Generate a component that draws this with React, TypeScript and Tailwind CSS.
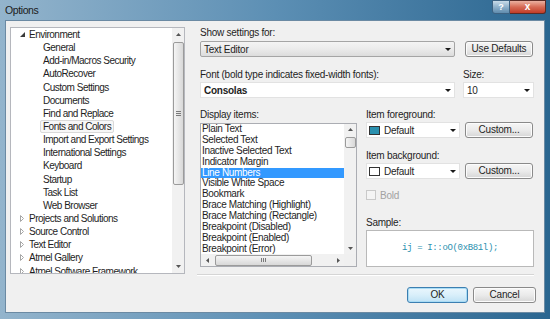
import React from "react";

const treeItems: { label: string; level: number; expanded?: boolean; selected?: boolean }[] = [
  { label: "Environment", level: 0, expanded: true },
  { label: "General", level: 1 },
  { label: "Add-in/Macros Security", level: 1 },
  { label: "AutoRecover", level: 1 },
  { label: "Custom Settings", level: 1 },
  { label: "Documents", level: 1 },
  { label: "Find and Replace", level: 1 },
  { label: "Fonts and Colors", level: 1, selected: true },
  { label: "Import and Export Settings", level: 1 },
  { label: "International Settings", level: 1 },
  { label: "Keyboard", level: 1 },
  { label: "Startup", level: 1 },
  { label: "Task List", level: 1 },
  { label: "Web Browser", level: 1 },
  { label: "Projects and Solutions", level: 0 },
  { label: "Source Control", level: 0 },
  { label: "Text Editor", level: 0 },
  { label: "Atmel Gallery", level: 0 },
  { label: "Atmel Software Framework", level: 0 },
];

const displayItems = [
  "Plain Text",
  "Selected Text",
  "Inactive Selected Text",
  "Indicator Margin",
  "Line Numbers",
  "Visible White Space",
  "Bookmark",
  "Brace Matching (Highlight)",
  "Brace Matching (Rectangle)",
  "Breakpoint (Disabled)",
  "Breakpoint (Enabled)",
  "Breakpoint (Error)",
];

function Arrow({ dir }: { dir: "up" | "down" | "left" | "right" }) {
  const vert = dir === "up" || dir === "down";
  const pts = {
    up: "0,3 5,3 2.5,0",
    down: "0,0 5,0 2.5,3",
    left: "3,0 3,5 0,2.5",
    right: "0,0 0,5 3,2.5",
  }[dir];
  return (
    <svg width={vert ? 5 : 3} height={vert ? 3 : 5} viewBox={vert ? "0 0 5 3" : "0 0 3 5"}>
      <polygon points={pts} fill="#555" />
    </svg>
  );
}

function DropArrow() {
  return (
    <svg width="6" height="3" viewBox="0 0 6 3" className="shrink-0">
      <polygon points="0,0 6,0 3,3" fill="#1a1a1a" />
    </svg>
  );
}

function Button({ label, focus, className }: { label: string; focus?: boolean; className: string }) {
  return (
    <div
      className={
        "h-[16px] flex items-center justify-center rounded-[3px] border text-[10px] leading-none text-[#1e1e1e] tracking-[-0.2px] " +
        (focus
          ? "border-[#3c7fb1] bg-linear-to-b from-[#eaf6fd] via-[#d9effa] to-[#bfe2f5] shadow-[inset_0_0_0_1px_#a9dcf5] "
          : "border-[#8a8a8a] bg-linear-to-b from-[#f6f6f6] via-[#ebebeb] to-[#d6d6d6] shadow-[inset_0_0_0_1px_#fcfcfc] ") +
        className
      }
    >
      {label}
    </div>
  );
}

export default function App() {
  return (
    <div className="w-[550px] h-[319px] flex flex-col bg-linear-to-r from-[#93b4cc] via-[#5c8fb4] to-[#2a6690] font-['Liberation_Sans',Arial,sans-serif] overflow-hidden">
      {/* Title bar */}
      <div className="h-[20px] flex items-start justify-between shrink-0">
        <span className="pl-[5px] leading-[20px] text-[10.5px] tracking-[-0.4px] text-[#1b1b1b]">Options</span>
        <div className="flex mr-[4px]">
          <div className="w-[18px] h-[14px] rounded-bl-[3px] border border-[#3d6282] bg-linear-to-b from-[#c9dbe8] via-[#8fb1cb] to-[#5f8cae] flex items-center justify-center text-white text-[9px] font-bold leading-none">
            ?
          </div>
          <div className="w-[36px] h-[14px] rounded-br-[3px] border border-l-0 border-[#5b2b25] bg-linear-to-b from-[#eab1a1] via-[#d66a55] to-[#c13b26] flex items-center justify-center text-white text-[10px] font-bold leading-none">
            x
          </div>
        </div>
      </div>

      {/* Client area */}
      <div className="flex-1 mx-[5px] mb-[6px] bg-[#f0f0f0] border border-[#6b8aa3] flex pl-[4px] pt-[6px] text-[#1e1e1e]">
        {/* Tree */}
        <div className="w-[175px] h-[247px] bg-white border border-[#b5b7bd] flex text-[10px] tracking-[-0.5px]">
          <div className="flex-1 overflow-hidden">
            {treeItems.map((t) => (
              <div key={t.label} className="h-[13.15px] leading-[13.15px] flex items-center whitespace-nowrap">
                {t.level === 0 ? (
                  <>
                    <div className="w-[8px] ml-[7px] flex justify-center">
                      {t.expanded ? (
                        <svg width="5" height="5" viewBox="0 0 5 5">
                          <polygon points="5,0 5,5 0,5" fill="#3a3a3a" />
                        </svg>
                      ) : (
                        <svg width="4" height="7" viewBox="0 0 4 7">
                          <polygon points="0.5,0.5 0.5,6.5 3.5,3.5" fill="none" stroke="#a6a6a6" strokeWidth="1" />
                        </svg>
                      )}
                    </div>
                    <span className="ml-[3px]">{t.label}</span>
                  </>
                ) : (
                  <span
                    className={
                      "ml-[29px] px-[2px] h-[13px] leading-[12px] rounded-[2px] border " +
                      (t.selected ? "border-[#d9d9d9] bg-[#f7f7f7]" : "border-transparent")
                    }
                  >
                    {t.label}
                  </span>
                )}
              </div>
            ))}
          </div>
          <div className="w-[12px] bg-[#f1f1f1] flex flex-col items-center">
            <div className="h-[13px] flex items-center">
              <Arrow dir="up" />
            </div>
            <div className="mt-[1px] w-[11px] h-[143px] rounded-[2px] border border-[#9b9b9b] bg-linear-to-r from-[#f5f5f5] to-[#d8d8d8] flex flex-col items-center justify-center gap-[1px]">
              <div className="w-[5px] h-px bg-[#7a7a7a]" />
              <div className="w-[5px] h-px bg-[#7a7a7a]" />
              <div className="w-[5px] h-px bg-[#7a7a7a]" />
            </div>
            <div className="flex-1" />
            <div className="h-[13px] flex items-center">
              <Arrow dir="down" />
            </div>
          </div>
        </div>

        {/* Right side */}
        <div className="ml-[15px] w-[334px] flex flex-col text-[10px] tracking-[-0.25px]">
          <div className="h-[12px] leading-[12px]">Show settings for:</div>
          <div className="mt-[2px] flex">
            <div className="w-[255px] h-[16px] rounded-[2px] border border-[#a5a5a5] bg-linear-to-b from-[#f4f4f4] via-[#ebebeb] to-[#dcdcdc] flex items-center justify-between pl-[3px] pr-[3px]">
              <span>Text Editor</span>
              <DropArrow />
            </div>
            <Button label="Use Defaults" className="ml-[10px] w-[68px]" />
          </div>

          <div className="mt-[12px] flex">
            <div className="w-[255px]">
              <div className="h-[12px] leading-[12px]">Font (bold type indicates fixed-width fonts):</div>
              <div className="mt-[1px] h-[16px] bg-white border border-[#e2e2e2] flex items-center justify-between pl-[3px] pr-[3px]">
                <span className="font-bold">Consolas</span>
                <DropArrow />
              </div>
            </div>
            <div className="ml-[8px] w-[71px]">
              <div className="h-[12px] leading-[12px]">Size:</div>
              <div className="mt-[1px] h-[16px] bg-white border border-[#e2e2e2] flex items-center justify-between pl-[3px] pr-[3px]">
                <span>10</span>
                <DropArrow />
              </div>
            </div>
          </div>

          <div className="mt-[11px] flex">
            {/* Display items */}
            <div className="w-[157px]">
              <div className="h-[12px] leading-[12px]">Display items:</div>
              <div className="mt-[2px] h-[144px] bg-white border border-[#abadb3] flex flex-col">
                <div className="flex h-[130px]">
                  <div className="flex-1 overflow-hidden tracking-[-0.35px]">
                    {displayItems.map((d, i) => (
                      <div
                        key={d}
                        className={
                          "h-[10.9px] leading-[10.9px] pl-[1px] whitespace-nowrap " +
                          (i === 4 ? "bg-[#3399ff] text-white" : "")
                        }
                      >
                        {d}
                      </div>
                    ))}
                  </div>
                  <div className="w-[12px] bg-[#f1f1f1] flex flex-col items-center">
                    <div className="h-[11px] flex items-center">
                      <Arrow dir="up" />
                    </div>
                    <div className="mt-[2px] w-[11px] h-[11px] rounded-[2px] border border-[#9b9b9b] bg-linear-to-r from-[#f5f5f5] to-[#d8d8d8]" />
                    <div className="flex-1" />
                    <div className="h-[11px] flex items-center">
                      <Arrow dir="down" />
                    </div>
                  </div>
                </div>
                <div className="flex h-[12px] bg-[#f1f1f1] items-center">
                  <div className="w-[12px] flex justify-center">
                    <Arrow dir="left" />
                  </div>
                  <div className="ml-[2px] w-[97px] h-[11px] rounded-[2px] border border-[#9b9b9b] bg-linear-to-b from-[#f5f5f5] to-[#d8d8d8] flex items-center justify-center gap-[1px]">
                    <div className="w-px h-[4px] bg-[#7a7a7a]" />
                    <div className="w-px h-[4px] bg-[#7a7a7a]" />
                    <div className="w-px h-[4px] bg-[#7a7a7a]" />
                  </div>
                  <div className="flex-1" />
                  <div className="w-[12px] flex justify-center">
                    <Arrow dir="right" />
                  </div>
                  <div className="w-[12px] h-[12px] bg-[#f0f0f0]" />
                </div>
              </div>
            </div>

            {/* Item colors */}
            <div className="ml-[9px] w-[168px] flex flex-col">
              <div className="h-[12px] leading-[12px]">Item foreground:</div>
              <div className="mt-[1px] flex">
                <div className="w-[94px] h-[16px] bg-white border border-[#e2e2e2] flex items-center pl-[2px] pr-[3px]">
                  <div className="w-[11px] h-[9px] border border-[#333] bg-[#2b91af]" />
                  <span className="ml-[4px] flex-1">Default</span>
                  <DropArrow />
                </div>
                <Button label="Custom..." className="ml-[5px] w-[68px]" />
              </div>

              <div className="mt-[12px] h-[12px] leading-[12px]">Item background:</div>
              <div className="mt-[1px] flex">
                <div className="w-[94px] h-[16px] bg-white border border-[#e2e2e2] flex items-center pl-[2px] pr-[3px]">
                  <div className="w-[11px] h-[9px] border border-[#333] bg-white" />
                  <span className="ml-[4px] flex-1">Default</span>
                  <DropArrow />
                </div>
                <Button label="Custom..." className="ml-[5px] w-[68px]" />
              </div>

              <div className="mt-[10px] h-[12px] flex items-center">
                <div className="w-[10px] h-[10px] border border-[#c9c9c9] bg-[#f4f4f4]" />
                <span className="ml-[4px] text-[#a2a2a2]">Bold</span>
              </div>

              <div className="mt-[16px] h-[12px] leading-[12px]">Sample:</div>
              <div className="mt-[1px] h-[37px] bg-white border border-[#b9b9b9] flex items-center justify-center">
                <span className="font-['Liberation_Mono','DejaVu_Sans_Mono',monospace] text-[9px] tracking-[-0.35px] text-[#2b91af]">
                  ij = I::oO(0xB81l);
                </span>
              </div>
            </div>
          </div>

          <div className="mt-[7px] -ml-[3px] border-t border-[#d5d5d5] shadow-[0_1px_0_#ffffff]" />

          <div className="mt-[12px] flex justify-end -mr-[2px]">
            <Button label="OK" focus className="w-[61px]" />
            <Button label="Cancel" className="ml-[5px] w-[63px]" />
          </div>
        </div>
      </div>
    </div>
  );
}
